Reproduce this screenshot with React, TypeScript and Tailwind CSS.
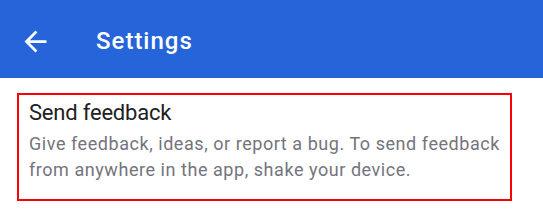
import React from 'react';

const App: React.FC = () => {
  return (
    <div className="w-[543px] h-[220px] bg-white font-['Roboto',sans-serif]">
      {/* header */}
      <div className="h-[78px] bg-[#2664d9] flex items-center pl-[19px] pt-[4px]">
        <svg viewBox="0 0 24 24" className="w-[33px] h-[33px] fill-white">
          <path d="M20 11H7.83l5.59-5.59L12 4l-8 8 8 8 1.41-1.41L7.83 13H20v-2z" />
        </svg>
        <h1 className="ml-[44px] text-[24px] leading-[32px] font-medium tracking-[1px] text-white">Settings</h1>
      </div>

      {/* feedback row */}
      <div className="ml-[17px] mt-[15px] w-[495px] border-2 border-[#ff0000] pl-[10px] pr-2 pt-[2px] pb-[16px]">
        <div className="text-[22px] leading-[32px] tracking-[-0.2px] text-[#212121]">Send feedback</div>
        <p className="mt-[2px] text-[18px] leading-[26px] tracking-[0.55px] text-[#74747c]">
          Give feedback, ideas, or report a bug. To send feedback from anywhere in the app, shake your device.
        </p>
      </div>
    </div>
  );
};

export default App;
